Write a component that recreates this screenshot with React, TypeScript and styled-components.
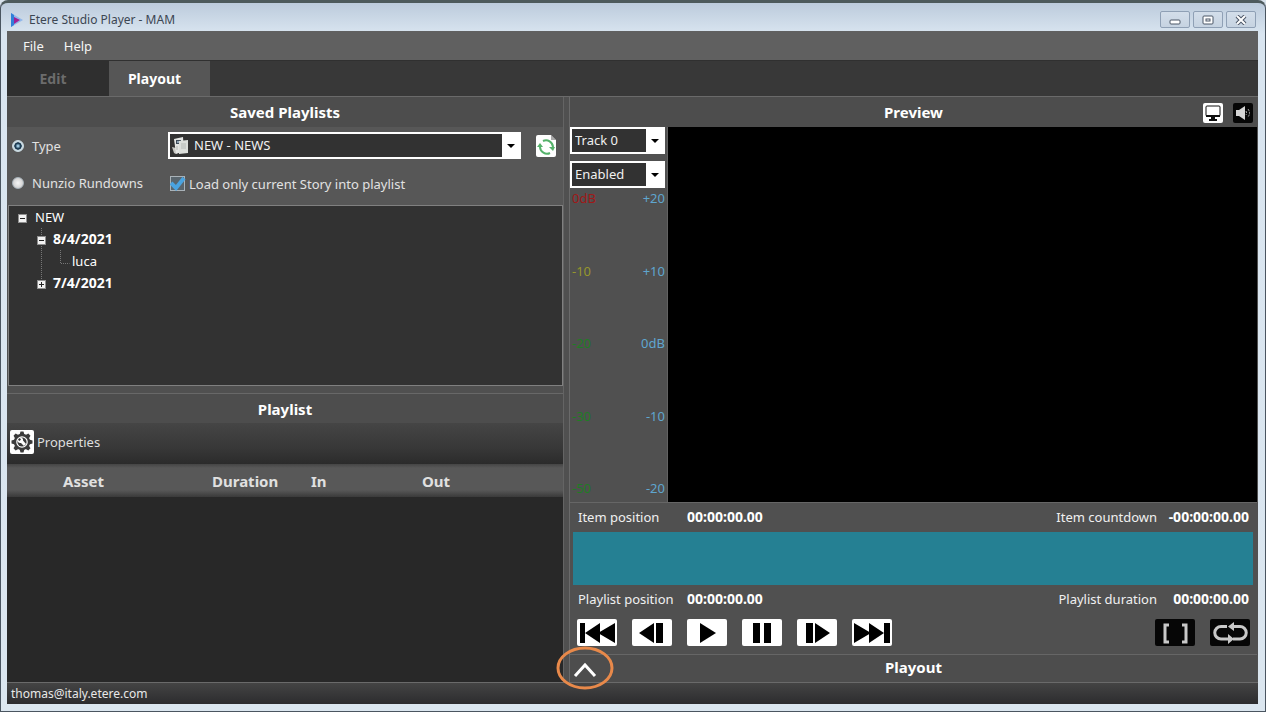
import React from "react";
import styled, { createGlobalStyle, css } from "styled-components";

const GlobalStyle = createGlobalStyle`
  * { box-sizing: border-box; }
  body {
    margin: 0;
    background: #d8e2ec;
    font-family: "Noto Sans", "Open Sans", sans-serif;
    font-size: 13px;
    line-height: 18px;
    color: #f0f0f0;
  }
  button, select, input { font: inherit; }
`;

const Window = styled.div`
  min-height: 100vh;
  display: flex;
  flex-direction: column;
  padding: 0 7px 7px 6px;
  background: linear-gradient(#bccbdc, #d9e5f0 31px, #dbe6ef);
  border: 1px solid #4a5560;
  border-top: 3px solid #4d5a5c;
  border-radius: 8px 8px 0 0;
`;

const TitleBar = styled.header`
  height: 28px;
  display: flex;
  align-items: center;
  gap: 6px;
  padding: 0 2px 0 4px;
  color: #3c4652;
  font-size: 12px;
`;

const WindowTitle = styled.span`
  flex: 1;
  padding-top: 5px;
`;

const TitleIcon = styled.svg`
  margin-top: 5px;
`;

const CaptionButtons = styled.div`
  display: flex;
  gap: 3px;
  padding-top: 5px;
`;

const CaptionButton = styled.button`
  width: 30px;
  height: 17px;
  padding: 0;
  display: grid;
  place-items: center;
  border: 1px solid #8fa0b5;
  border-radius: 2px;
  background: linear-gradient(#d3deea, #c6d3e1);
`;

const Client = styled.div`
  flex: 1;
  display: flex;
  flex-direction: column;
  background: #505050;
`;

const MenuBar = styled.nav`
  height: 29px;
  display: flex;
  align-items: center;
  gap: 20px;
  padding-left: 16px;
  background: #606060;
`;

const MenuItem = styled.button`
  padding: 0;
  border: 0;
  background: none;
  color: #f5f5f5;
`;

const TabBar = styled.div`
  height: 36px;
  display: flex;
  background: #383838;
  border-top: 1px solid #303030;
`;

const Tab = styled.button<{ $active?: boolean }>`
  width: ${(p) => (p.$active ? 101 : 102)}px;
  border: 0;
  padding: 0 10px 0 0;
  font-size: 14px;
  font-weight: 700;
  color: ${(p) => (p.$active ? "#ffffff" : "#6c6c6c")};
  background: ${(p) => (p.$active ? "#565656" : "#2f2f2f")};
`;

const Workspace = styled.main`
  flex: 1;
  display: grid;
  grid-template-columns: minmax(0, 557fr) minmax(0, 688fr);
  gap: 5px;
  padding-right: 1px;
  border-top: 1px solid #6a6a6a;
  border-bottom: 1px solid #6a6a6a;
`;

const Column = styled.div`
  display: flex;
  flex-direction: column;
  min-width: 0;
  border-right: 1px solid #646464;
`;

const RightColumn = styled(Column)`
  border-right: 0;
  border-left: 1px solid #6a6a6a;
`;

const Panel = styled.section<{ $grow?: boolean }>`
  display: flex;
  flex-direction: column;
  ${(p) => p.$grow && css`flex: 1;`}
`;

const PanelHeader = styled.div<{ $lined?: boolean }>`
  height: 30px;
  flex: none;
  display: flex;
  align-items: center;
  justify-content: center;
  position: relative;
  background: #4d4d4d;
  ${(p) => p.$lined && css`border-top: 1px solid #686868;`}
`;

const PanelTitle = styled.h2`
  margin: 0;
  font-size: 15px;
  line-height: 20px;
  font-weight: 700;
  color: #ffffff;
`;

const SourceForm = styled.form`
  height: 78px;
  display: grid;
  grid-template-columns: 156px minmax(0, 1fr);
  grid-template-rows: 37px 38px;
  align-items: center;
  padding-left: 5px;
  background: #575757;
`;

const Choice = styled.label`
  display: flex;
  align-items: center;
  gap: 8px;
  color: #e2e2e2;
`;

const Radio = styled.input`
  appearance: none;
  width: 12px;
  height: 12px;
  margin: 0;
  border-radius: 50%;
  border: 1px solid #a9b4bb;
  background: radial-gradient(#f5f5f5, #c4c4c4);
  &:checked {
    border: 1px solid #ccdde4;
    background: radial-gradient(#9cc6de 10%, #17364d 38%, #17364d 48%, #c9d9e1 56%);
  }
`;

const SourceRow = styled.div`
  display: flex;
  align-items: center;
  gap: 15px;
  padding-right: 7px;
`;

const CheckChoice = styled(Choice)`
  gap: 2px;
  padding: 2px 0 0 2px;
`;

const CheckFrame = styled.span`
  display: grid;
  width: 17px;
  height: 16px;
  & > * { grid-area: 1 / 1; }
`;

const CheckInput = styled.input`
  appearance: none;
  width: 15px;
  height: 15px;
  margin: 0;
  border: 1px solid #a9b2b8;
  background: #59656d;
`;

const SelectFrame = styled.div<{ $big?: boolean }>`
  display: flex;
  align-items: center;
  min-width: 0;
  height: 27px;
  border: 2px solid #ffffff;
  background: #323232;
  ${(p) => p.$big && css`flex: 1; padding-left: 2px;`}
`;

const SelectBox = styled.select<{ $big?: boolean }>`
  appearance: none;
  flex: 1;
  min-width: 0;
  height: 22px;
  border: 0;
  padding: 0 0 1px ${(p) => (p.$big ? 5 : 3)}px;
  outline: 0;
  background: #323232;
  color: #f0f0f0;
`;

const SelectArrow = styled.span`
  flex: none;
  align-self: stretch;
  width: 17px;
  display: grid;
  place-items: center;
  background: #ffffff;
`;

const IconButton = styled.button<{ $dark?: boolean; $w?: number; $h?: number }>`
  flex: none;
  width: ${(p) => p.$w ?? 20}px;
  height: ${(p) => p.$h ?? 20}px;
  padding: 0;
  display: grid;
  place-items: center;
  border: 0;
  border-radius: 2px;
  background: ${(p) => (p.$dark ? "#060606" : "#ffffff")};
`;

const TreeBox = styled.div`
  height: 181px;
  margin: 0 0 7px 1px;
  padding: 0 0 0 9px;
  border: 1px solid #808080;
  background: #323232;
`;

const TreeList = styled.ul<{ $guide?: boolean }>`
  list-style: none;
  margin: 0;
  padding: 0;
  & & { padding-left: 19px; }
  ${(p) => p.$guide && css`
    background: repeating-linear-gradient(#777777 0 1px, transparent 1px 2px)
      23px 0 / 1px calc(100% - 11px) no-repeat;
  `}
`;

const TreeRow = styled.div<{ $strong?: boolean; $leaf?: boolean }>`
  height: 22px;
  display: flex;
  align-items: center;
  gap: ${(p) => (p.$leaf ? 2 : p.$strong ? 7 : 8)}px;
  font-size: ${(p) => (p.$strong ? 14 : 13)}px;
  font-weight: ${(p) => (p.$strong ? 700 : 400)};
  color: #ffffff;
`;

const Toggle = styled.button`
  width: 9px;
  height: 9px;
  padding: 0;
  margin-top: 3px;
  display: grid;
  place-items: center;
  border: 1px solid #8f8f8f;
  background: #f2f2f2;
`;

const ToolStrip = styled.div`
  height: 41px;
  display: flex;
  align-items: center;
  padding: 0 0 3px 3px;
  background: linear-gradient(#454545, #383838 60%, #2b2b2b);
`;

const ToolButton = styled.button`
  display: flex;
  align-items: center;
  gap: 3px;
  padding: 0;
  border: 0;
  background: none;
  color: #dedede;
`;

const ToolIcon = styled.span`
  width: 24px;
  height: 24px;
  display: grid;
  place-items: center;
  border-radius: 2px;
  background: #ffffff;
`;

const TableArea = styled.div`
  flex: 1;
  background: #282828;
`;

const AssetTable = styled.table`
  width: 100%;
  table-layout: fixed;
  border-collapse: collapse;
`;

const HeadRow = styled.tr`
  height: 33px;
  background: linear-gradient(#454545, #585858 4px, #585858 26px, #3a3a3a);
`;

const HeadCell = styled.th<{ $w?: number }>`
  width: ${(p) => (p.$w ? `${p.$w}px` : "auto")};
  padding: 0;
  text-align: left;
  font-size: 15px;
  font-weight: 700;
  color: #e0e0e0;
`;

const HeaderTools = styled.div`
  position: absolute;
  right: 4px;
  top: 6px;
  display: flex;
  gap: 10px;
`;

const PreviewBody = styled.div`
  flex: 1;
  display: grid;
  grid-template-columns: 98px minmax(0, 1fr);
  border-bottom: 1px solid #666666;
`;

const AudioColumn = styled.div`
  display: flex;
  flex-direction: column;
  gap: 7px;
  padding-right: 2px;
  border-right: 1px solid #626262;
`;

const Scales = styled.div`
  flex: 1;
  display: flex;
  justify-content: space-between;
  margin-top: -7px;
  padding: 1px 0 5px 2px;
`;

const Scale = styled.div<{ $end?: boolean }>`
  display: flex;
  flex-direction: column;
  justify-content: space-between;
  text-align: ${(p) => (p.$end ? "right" : "left")};
`;

const ScaleMark = styled.span<{ $color: string }>`
  color: ${(p) => p.$color};
`;

const Video = styled.div`
  background: #000000;
`;

const TimeRow = styled.div`
  height: 28px;
  display: flex;
  align-items: center;
  padding: 0 8px;
  color: #f0f0f0;
`;

const TimeLabel = styled.span<{ $fixed?: boolean }>`
  ${(p) => p.$fixed ? css`width: 109px;` : css`margin-left: auto;`}
`;

const TimeValue = styled.strong<{ $end?: boolean }>`
  font-size: 14px;
  color: #ffffff;
  ${(p) => p.$end && css`min-width: 92px; text-align: right;`}
`;

const Timeline = styled.div`
  height: 53px;
  margin: 1px 4px 0 3px;
  background: #258093;
`;

const Transport = styled.div`
  height: 41px;
  display: flex;
  align-items: center;
  gap: 15px;
  padding: 0 7px 2px;
`;

const Spacer = styled.span`
  flex: 1;
`;

const PlayoutHeader = styled(PanelHeader)`
  height: 28px;
  padding-bottom: 3px;
  border-top: 1px solid #666666;
`;

const ExpandButton = styled.button`
  position: absolute;
  left: -14px;
  top: -9px;
  width: 58px;
  height: 44px;
  padding: 0;
  border: 0;
  background: none;
  z-index: 1;
  & > svg { display: block; }
`;

const StatusBar = styled.footer`
  height: 21px;
  padding: 2px 4px;
  background: linear-gradient(#444444, #2c2c2e);
  font-size: 12px;
  color: #e8e8e8;
`;

const ArrowGlyph = () => (
  <SelectArrow>
    <svg width="8" height="4" viewBox="0 0 8 4" aria-hidden="true">
      <path d="M0 0h8L4 4z" fill="#000" />
    </svg>
  </SelectArrow>
);

const NewsIcon = () => (
  <svg width="17" height="18" viewBox="0 0 17 18" aria-hidden="true">
    <path d="M0 10l4 1v6l-2-1z" fill="#c9c9c5" />
    <path d="M2 2l9-2 1 14-8 3z" fill="#e4e6e4" />
    <path d="M4 3h5v4H4z" fill="#3d4a57" />
    <path d="M5 4h2v2H5z" fill="#8fa4b5" />
    <path d="M7 4l9-1v13l-9 1z" fill="#dcdfdb" />
    <path d="M9 7h5M9 9h5M9 11h5M4 10h2M4 12h2" stroke="#b4b9b5" />
  </svg>
);

const RefreshIcon = () => (
  <svg width="20" height="22" viewBox="0 0 20 22" aria-hidden="true">
    <path d="M15 0l5 5h-5z" fill="#a9a9a9" />
    <path d="M15 0h5v5z" fill="#575757" />
    <g fill="none" stroke="#55b26b" strokeWidth="2">
      <path d="M7 6a7 7 0 0 1 10 6" />
      <path d="M14 18a7 7 0 0 1-10-6" />
    </g>
    <path d="M13 12h6l-2 4zM1 12l3-4 3 4z" fill="#55b26b" />
  </svg>
);

const MonitorIcon = () => (
  <svg width="18" height="16" viewBox="0 0 18 16" aria-hidden="true">
    <rect x="2" y="1" width="14" height="10" rx="1" fill="#fff" stroke="#111" />
    <path d="M2 10h14v2H2zM7 12h4v2h2v2H5v-2h2z" fill="#111" />
  </svg>
);

const SpeakerIcon = () => (
  <svg width="18" height="16" viewBox="0 0 18 16" aria-hidden="true">
    <path d="M2 5h3l6-4v14l-6-4H2z" fill="#d5d5d5" />
    <path d="M12 6q1 2 0 4M14 4q3 4 0 8" fill="none" stroke="#a8a8a8" strokeDasharray="2 1" />
  </svg>
);

const GearIcon = () => (
  <svg width="22" height="22" viewBox="-11 -11 22 22" aria-hidden="true">
    <g fill="#3b3b3b">
      {[0, 45, 90, 135, 180, 225, 270, 315].map((a) => (
        <path key={a} d="M-2.5-7l1-3.500h3l1 3.500z" transform={`rotate(${a})`} />
      ))}
    </g>
    <circle r="7" fill="#fff" stroke="#3b3b3b" strokeWidth="2.400" />
    <circle r="4.600" fill="#3b3b3b" />
    <path d="M-4.500-2.500l2 1.500 1.500-1.500-1.500-2c2.500-.5 4 1 3.500 3L4 2 2 4-1 1c-2 .5-4-1-3.500-3.500z" fill="#fff" />
  </svg>
);

const transport: { label: string; shape: string }[] = [
  { label: "Previous item", shape: "M3 4h5v20H3zM23 4v20L8 14zM38 4v20L21 14z" },
  { label: "Step back", shape: "M22 4v20L7 14zM24 4h7v20h-7z" },
  { label: "Play", shape: "M13 4l16 10-16 10z" },
  { label: "Pause", shape: "M11 4h7v20h-7zM22 4h7v20h-7z" },
  { label: "Step forward", shape: "M9 4h7v20H9zM18 4l15 10-15 10z" },
  { label: "Next item", shape: "M2 4l17 10L2 24zM17 4l15 10-15 10zM32 4h6v20h-6z" },
];

const leftMarks = [
  ["0dB", "#a01818"],
  ["-10", "#96962c"],
  ["-20", "#1f7d24"],
  ["-30", "#1f7d24"],
  ["-50", "#1f7d24"],
];
const rightMarks = ["+20", "+10", "0dB", "-10", "-20"];

const TreeToggle = ({ open, label }: { open: boolean; label: string }) => (
  <Toggle type="button" aria-label={label} aria-expanded={open}>
    <svg width="7" height="7" viewBox="0 0 7 7" aria-hidden="true">
      <path d={open ? "M1 3h5v1H1z" : "M1 3h5v1H1zM3 1h1v5H3z"} fill="#222" />
    </svg>
  </Toggle>
);

const SmallSelect = ({ label, value }: { label: string; value: string }) => (
  <SelectFrame>
    <SelectBox aria-label={label} defaultValue={value}>
      <option>{value}</option>
    </SelectBox>
    <ArrowGlyph />
  </SelectFrame>
);

export default function App() {
  return (
    <>
      <GlobalStyle />
      <Window>
        <TitleBar>
          <TitleIcon width="12" height="14" viewBox="0 0 12 14" aria-hidden="true">
            <path d="M0 0l12 7-12 7z" fill="#8fb6ea" />
            <path d="M0 0l3 2v10l-3 2z" fill="#2f7fd8" />
            <path d="M3 4l6 3-6 4z" fill="#a01f95" />
          </TitleIcon>
          <WindowTitle>Etere Studio Player - MAM</WindowTitle>
          <CaptionButtons>
            <CaptionButton type="button" aria-label="Minimize">
              <svg width="12" height="10" viewBox="0 0 12 10">
                <rect x="1" y="5" width="10" height="4" rx="1" fill="#fff" stroke="#4b5666" />
              </svg>
            </CaptionButton>
            <CaptionButton type="button" aria-label="Maximize">
              <svg width="12" height="10" viewBox="0 0 12 10">
                <rect x="1" y="1" width="10" height="8" rx="1" fill="#fff" stroke="#4b5666" />
                <rect x="4" y="4" width="4" height="2" fill="#fff" stroke="#4b5666" />
              </svg>
            </CaptionButton>
            <CaptionButton type="button" aria-label="Close">
              <svg width="12" height="10" viewBox="0 0 12 10">
                <path d="M2 1l8 8M10 1l-8 8" stroke="#4b5666" strokeWidth="4" />
                <path d="M2 1l8 8M10 1l-8 8" stroke="#fff" strokeWidth="2" />
              </svg>
            </CaptionButton>
          </CaptionButtons>
        </TitleBar>

        <Client>
          <MenuBar>
            <MenuItem type="button">File</MenuItem>
            <MenuItem type="button">Help</MenuItem>
          </MenuBar>
          <TabBar>
            <Tab type="button">Edit</Tab>
            <Tab type="button" $active>Playout</Tab>
          </TabBar>

          <Workspace>
            <Column>
              <Panel>
                <PanelHeader>
                  <PanelTitle>Saved Playlists</PanelTitle>
                </PanelHeader>
                <SourceForm>
                  <Choice>
                    <Radio type="radio" name="source" defaultChecked />
                    Type
                  </Choice>
                  <SourceRow>
                    <SelectFrame $big>
                      <NewsIcon />
                      <SelectBox $big aria-label="Playlist type" defaultValue="NEW - NEWS">
                        <option>NEW - NEWS</option>
                      </SelectBox>
                      <ArrowGlyph />
                    </SelectFrame>
                    <IconButton type="button" aria-label="Refresh" $h={22}>
                      <RefreshIcon />
                    </IconButton>
                  </SourceRow>
                  <Choice>
                    <Radio type="radio" name="source" />
                    Nunzio Rundowns
                  </Choice>
                  <CheckChoice>
                    <CheckFrame>
                      <CheckInput type="checkbox" defaultChecked />
                      <svg width="17" height="16" viewBox="0 0 17 16" aria-hidden="true">
                        <path d="M1 7l5 5L14 2" fill="none" stroke="#4aa3e0" strokeWidth="4" />
                      </svg>
                    </CheckFrame>
                    Load only current Story into playlist
                  </CheckChoice>
                </SourceForm>
                <TreeBox>
                  <TreeList>
                    <li>
                      <TreeRow>
                        <TreeToggle open label="Collapse NEW" />
                        NEW
                      </TreeRow>
                      <TreeList $guide>
                        <li>
                          <TreeRow $strong>
                            <TreeToggle open label="Collapse 8/4/2021" />
                            8/4/2021
                          </TreeRow>
                          <TreeList>
                            <li>
                              <TreeRow $leaf>
                                <svg width="14" height="22" viewBox="0 0 14 22" aria-hidden="true">
                                  <path d="M4.500 0v13.500h9" fill="none" stroke="#777" strokeDasharray="1 1" />
                                </svg>
                                luca
                              </TreeRow>
                            </li>
                          </TreeList>
                        </li>
                        <li>
                          <TreeRow $strong>
                            <TreeToggle open={false} label="Expand 7/4/2021" />
                            7/4/2021
                          </TreeRow>
                        </li>
                      </TreeList>
                    </li>
                  </TreeList>
                </TreeBox>
              </Panel>

              <Panel $grow>
                <PanelHeader $lined>
                  <PanelTitle>Playlist</PanelTitle>
                </PanelHeader>
                <ToolStrip>
                  <ToolButton type="button">
                    <ToolIcon><GearIcon /></ToolIcon>
                    Properties
                  </ToolButton>
                </ToolStrip>
                <TableArea>
                  <AssetTable>
                    <thead>
                      <HeadRow>
                        <HeadCell $w={56} aria-label="Marker" />
                        <HeadCell $w={149}>Asset</HeadCell>
                        <HeadCell $w={99}>Duration</HeadCell>
                        <HeadCell $w={111}>In</HeadCell>
                        <HeadCell>Out</HeadCell>
                      </HeadRow>
                    </thead>
                  </AssetTable>
                </TableArea>
              </Panel>
            </Column>

            <RightColumn>
              <Panel $grow>
                <PanelHeader>
                  <PanelTitle>Preview</PanelTitle>
                  <HeaderTools>
                    <IconButton type="button" aria-label="Monitor"><MonitorIcon /></IconButton>
                    <IconButton type="button" aria-label="Audio" $dark><SpeakerIcon /></IconButton>
                  </HeaderTools>
                </PanelHeader>
                <PreviewBody>
                  <AudioColumn>
                    <SmallSelect label="Audio track" value="Track 0" />
                    <SmallSelect label="Audio state" value="Enabled" />
                    <Scales>
                      <Scale>
                        {leftMarks.map(([t, c]) => <ScaleMark key={t} $color={c}>{t}</ScaleMark>)}
                      </Scale>
                      <Scale $end>
                        {rightMarks.map((t) => <ScaleMark key={t} $color="#5fa6cf">{t}</ScaleMark>)}
                      </Scale>
                    </Scales>
                  </AudioColumn>
                  <Video />
                </PreviewBody>
                <TimeRow>
                  <TimeLabel $fixed>Item position</TimeLabel>
                  <TimeValue>00:00:00.00</TimeValue>
                  <TimeLabel>Item countdown</TimeLabel>
                  <TimeValue $end>-00:00:00.00</TimeValue>
                </TimeRow>
                <Timeline />
                <TimeRow>
                  <TimeLabel $fixed>Playlist position</TimeLabel>
                  <TimeValue>00:00:00.00</TimeValue>
                  <TimeLabel>Playlist duration</TimeLabel>
                  <TimeValue $end>00:00:00.00</TimeValue>
                </TimeRow>
                <Transport>
                  {transport.map((b) => (
                    <IconButton key={b.label} type="button" aria-label={b.label} $w={40} $h={27}>
                      <svg width="40" height="27" viewBox="0 0 40 27" aria-hidden="true">
                        <path d={b.shape} fill="#000" />
                      </svg>
                    </IconButton>
                  ))}
                  <Spacer />
                  <IconButton type="button" aria-label="Mark range" $dark $w={40} $h={27}>
                    <svg width="40" height="27" viewBox="0 0 40 27" aria-hidden="true">
                      <path d="M14 6h-4v17h4M27 6h4v17h-4" fill="none" stroke="#c8c8c8" strokeWidth="3" />
                    </svg>
                  </IconButton>
                  <IconButton type="button" aria-label="Loop" $dark $w={40} $h={27}>
                    <svg width="40" height="27" viewBox="0 0 40 27" aria-hidden="true">
                      <path d="M17 7.500h-6a6 6 0 0 0 0 12.500h8M23 20h7a6 6 0 0 0 0-12.500h-9" fill="none" stroke="#c8c8c8" strokeWidth="3" />
                      <path d="M18 15l6 5-6 5zM24 3v9l-6-4.500z" fill="#c8c8c8" />
                    </svg>
                  </IconButton>
                </Transport>
              </Panel>
              <PlayoutHeader>
                <ExpandButton type="button" aria-label="Expand playout">
                  <svg width="58" height="44" viewBox="0 0 58 44" aria-hidden="true">
                    <ellipse cx="29" cy="22" rx="27" ry="20" fill="none" stroke="#e8894a" strokeWidth="3" />
                    <path d="M19 30l10-11 10 11" fill="none" stroke="#fff" strokeWidth="3" />
                  </svg>
                </ExpandButton>
                <PanelTitle>Playout</PanelTitle>
              </PlayoutHeader>
            </RightColumn>
          </Workspace>
          <StatusBar>thomas@italy.etere.com</StatusBar>
        </Client>
      </Window>
    </>
  );
}
